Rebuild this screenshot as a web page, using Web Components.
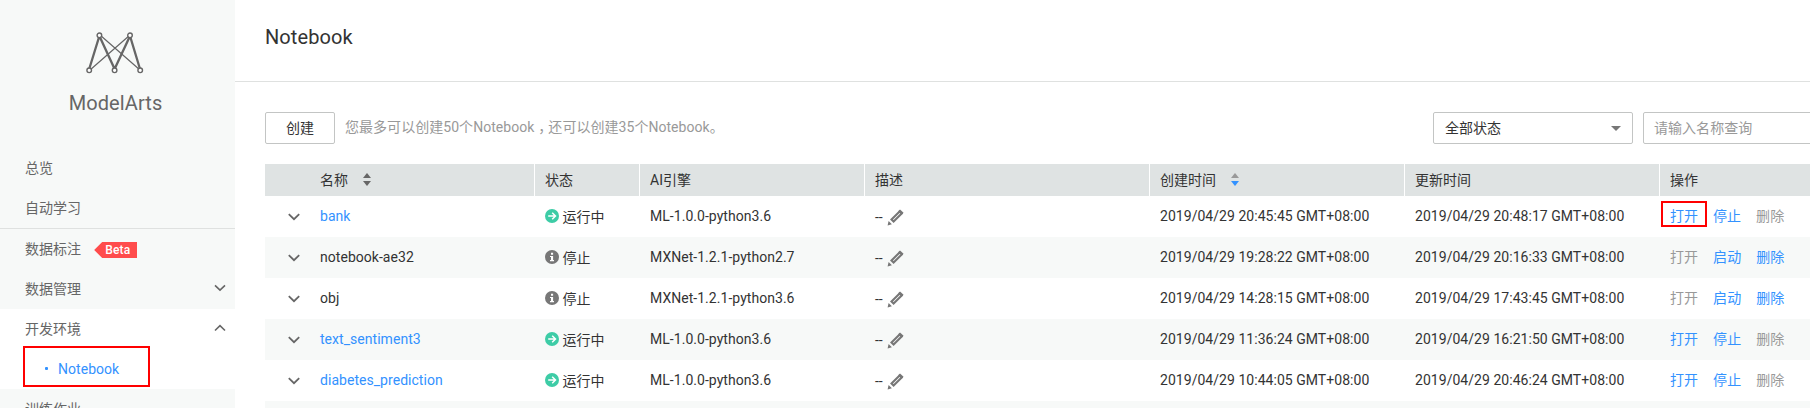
<!DOCTYPE html>
<html lang="zh-CN">
<head>
<meta charset="utf-8">
<title>ModelArts - Notebook</title>
<style>
html,body{margin:0;height:408px;overflow:hidden;background:#fff}
body{font:14px/20px Roboto,"Noto Sans CJK SC",sans-serif;color:#333;letter-spacing:.04px}
</style>
</head>
<body>
<ma-app>
  <ma-sidebar slot="side">
    <ma-item>总览</ma-item>
    <ma-item>自动学习</ma-item>
    <ma-item divided>数据标注<ma-tag slot="extra">Beta</ma-tag></ma-item>
    <ma-item>数据管理<ma-icon slot="end" name="down"></ma-icon></ma-item>
    <ma-item open>开发环境<ma-icon slot="end" name="up"></ma-icon></ma-item>
    <ma-subitem>Notebook</ma-subitem>
    <ma-item>训练作业</ma-item>
  </ma-sidebar>
  <ma-page heading="Notebook">
    <ma-toolbar></ma-toolbar>
    <ma-table></ma-table>
  </ma-page>
</ma-app>
<script>
const define = (name, html) => customElements.define(name, class extends HTMLElement {
  connectedCallback() {
    if (this.shadowRoot) return;
    const root = this.attachShadow({ mode: 'open' });
    root.innerHTML = typeof html === 'function' ? html(this) : html;
  }
});

const icons = {
  down: [12, 8, '<path d="M1 1.3 6 6.1 11 1.3" fill="none" stroke="#666" stroke-width="1.6"/>'],
  up: [12, 8, '<path d="M1 6.5 6 1.7 11 6.5" fill="none" stroke="#666" stroke-width="1.6"/>'],
  expand: [12, 8, '<path d="M.8 1.2 6 6.2 11.2 1.2" fill="none" stroke="#666" stroke-width="1.8"/>'],
  run: [14, 14, '<circle cx="7" cy="7" r="7" fill="#3dcca6"/><path d="M3.2 7h7M7.2 3.7 10.5 7l-3.3 3.3" fill="none" stroke="#fff" stroke-width="1.5"/>'],
  stop: [14, 14, '<circle cx="7" cy="7" r="7" fill="#777"/><path d="M6 2.7h2.1v2H6zM5 5.9h3.1v4.2H9v1.1H5v-1.1h1V7H5z" fill="#fff"/>'],
  edit: [17, 17, '<path d="M4.5 10.5 12.6 2.4l2.1 2.1-8.1 8.1z" fill="none" stroke="#777" stroke-width="2.1"/><path d="M11.2 2.2 13 .4l3.6 3.4-1.8 1.8z" fill="#777"/><path d="M1.6 11.9 4.9 15.2.6 16.4z" fill="#777"/>'],
  sort: [8, 13, '<path d="M0 5 4 0l4 5z" fill="#666"/><path d="M0 8h8l-4 5z" fill="#666"/>'],
  sorted: [8, 13, '<path d="M0 5 4 0l4 5z" fill="#999"/><path d="M0 8h8l-4 5z" fill="#3392ff"/>'],
  caret: [10, 5, '<path d="M0 0h10L5 5z" fill="#777"/>'],
  logo: [58, 42, '<g fill="none" stroke="#666"><path d="M4 38 44 3M14 3 54 38" stroke-width="1.2"/><path d="M3.2 37 13.4 4 28.6 37 44 4 54 37" stroke-width="2.3"/><g fill="#fff" stroke-width="1.4"><circle cx="13.4" cy="3.3" r="2.3"/><circle cx="44" cy="3.3" r="2.3"/><circle cx="3.2" cy="38.3" r="2.3"/><circle cx="28.6" cy="38.3" r="2.3"/><circle cx="54.2" cy="38.3" r="2.3"/></g></g>']
};
define('ma-icon', el => {
  const [w, h, body] = icons[el.getAttribute('name')];
  return `<style>:host{display:inline-block;width:${w}px;height:${h}px;flex:none}svg{display:block}</style>
  <svg width="${w}" height="${h}" viewBox="0 0 ${w} ${h}">${body}</svg>`;
});

define('ma-app', `<style>:host{display:grid;grid-template-columns:235px 1fr;height:408px;overflow:hidden}</style>
<slot name="side"></slot><slot></slot>`);

define('ma-sidebar', `<style>
:host{display:flex;flex-direction:column;background:#f7f9f8;color:#666;overflow:hidden}
header{height:148px;flex:none;display:flex;flex-direction:column;align-items:center;box-sizing:border-box;padding-top:32px;padding-right:4px}
header ma-icon{margin-right:2px}
span{font-size:20px;line-height:28px;margin-top:15px;letter-spacing:.1px}
</style>
<header><ma-icon name="logo"></ma-icon><span>ModelArts</span></header><slot></slot>`);

define('ma-item', `<style>
:host{display:flex;align-items:center;flex:none;height:40px;padding:0 9px 0 25px}
:host([divided]){border-top:1px solid #dfe1e0}
:host([open]){background:#fff}
.end{margin-left:auto;display:flex;padding-bottom:3px}
</style><slot></slot><slot name="extra"></slot><div class="end"><slot name="end"></slot></div>`);

define('ma-tag', `<style>
:host{display:block;margin:2px 0 0 13px;width:43px;height:16px;box-sizing:border-box;padding-left:11px;background:#ff4c4c;color:#fff;
font:500 12px/17px Roboto,sans-serif;letter-spacing:.2px;clip-path:polygon(0 50%,8px 0,100% 0,100% 100%,8px 100%)}
</style><slot></slot>`);

define('ma-subitem', `<style>
:host{display:flex;flex:none;height:40px;background:#fff;color:#3392ff;box-sizing:border-box;padding-left:23px}
div{width:127px;height:41px;box-sizing:border-box;border:2px solid #f00;margin-top:-3px;display:flex;align-items:center;padding:4px 0 0 20px}
i{width:3px;height:3px;background:#3392ff;border-radius:1px;margin-right:10px}
</style><div><i></i><slot></slot></div>`);

define('ma-page', el => `<style>
:host{display:block;min-width:0;overflow:hidden}
h1{margin:0;height:82px;box-sizing:border-box;padding:23px 0 0 30px;border-bottom:1px solid #dfe1e0;font-size:20px;font-weight:400;line-height:28px;letter-spacing:.08px}
.body{padding:30px 0 0 30px}
</style><h1>${el.getAttribute('heading')}</h1><div class="body"><slot></slot></div>`);

define('ma-toolbar', `<style>
:host{display:flex;height:52px;color:#333;align-items:flex-start}
button,.select,.search{box-sizing:border-box;height:32px;border:1px solid #c3c5c4;border-radius:2px;background:#fff;color:inherit;font:inherit}
button{width:70px;padding:0}
p{margin:5px auto 0 10px;color:#999}
.c{padding-left:4px;letter-spacing:-4px}
.select{width:200px;display:flex;align-items:center;justify-content:space-between;padding:0 11px}
.search{width:200px;margin:0 -33px 0 10px;padding:5px 10px;color:#999;flex:none}
</style>
<button>创建</button><p>您最多可以创建50个Notebook<span class="c">，</span>还可以创建35个Notebook。</p>
<div class="select"><span>全部状态</span><ma-icon name="caret"></ma-icon></div>
<div class="search">请输入名称查询</div>`);

const rows = [
  ['bank', 1, 'ML-1.0.0-python3.6', '20:45:45', '20:48:17'],
  ['notebook-ae32', 0, 'MXNet-1.2.1-python2.7', '19:28:22', '20:16:33'],
  ['obj', 0, 'MXNet-1.2.1-python3.6', '14:28:15', '17:43:45'],
  ['text_sentiment3', 1, 'ML-1.0.0-python3.6', '11:36:24', '16:21:50'],
  ['diabetes_prediction', 1, 'ML-1.0.0-python3.6', '10:44:05', '20:46:24']
];
define('ma-table', () => `<style>
:host{display:block}
.r{display:grid;grid-template-columns:270px 105px 225px 285px 255px 255px 1fr;height:41px}
.r:nth-of-type(even){background:#fff}
.r:nth-of-type(odd){background:#f7f9f8}
.r>div{display:flex;align-items:center;padding:0 0 1px 10px;white-space:nowrap}
.r>div:first-child{padding-left:55px}
.r.h{height:32px;background:#dfe3e3}
.h>div:not(:last-child){border-right:1px solid #fff}
.h ma-icon{margin-left:15px}
.r:not(.h)>div:first-child{padding-left:23px}
.r:not(.h)>div:first-child ma-icon{margin-top:2px}
.n{margin-left:20px}
.s{gap:3.5px}.s span{padding-top:2px}
.d{gap:5px}.d span{padding-top:1px;letter-spacing:-.2px}.d ma-icon{margin-top:2px}
.ops{gap:15px}
a{color:#3392ff}.off{color:#999}
.mark{box-sizing:border-box;border:2px solid #f00;width:46px;height:26px;align-self:flex-start;margin:5px -9px 0 -9px;padding:3px 0 0 7px}
</style>
<div class="r h"><div>名称<ma-icon name="sort"></ma-icon></div><div>状态</div><div>AI引擎</div><div>描述</div><div>创建时间<ma-icon name="sorted"></ma-icon></div><div>更新时间</div><div>操作</div></div>
${rows.map(([name, on, engine, created, updated], i) => `<div class="r">
<div><ma-icon name="expand"></ma-icon>${on ? `<a class="n">${name}</a>` : `<span class="n">${name}</span>`}</div>
<div class="s"><ma-icon name="${on ? 'run' : 'stop'}"></ma-icon><span>${on ? '运行中' : '停止'}</span></div>
<div>${engine}</div>
<div class="d"><span>--</span><ma-icon name="edit"></ma-icon></div>
<div>2019/04/29 ${created} GMT+08:00</div>
<div>2019/04/29 ${updated} GMT+08:00</div>
<div class="ops"><a class="${on ? '' : 'off'} ${i ? '' : 'mark'}">打开</a><a>${on ? '停止' : '启动'}</a><a class="${on ? 'off' : ''}">删除</a></div>
</div>`).join('')}
<div class="r"></div>`);
</script>
</body>
</html>
